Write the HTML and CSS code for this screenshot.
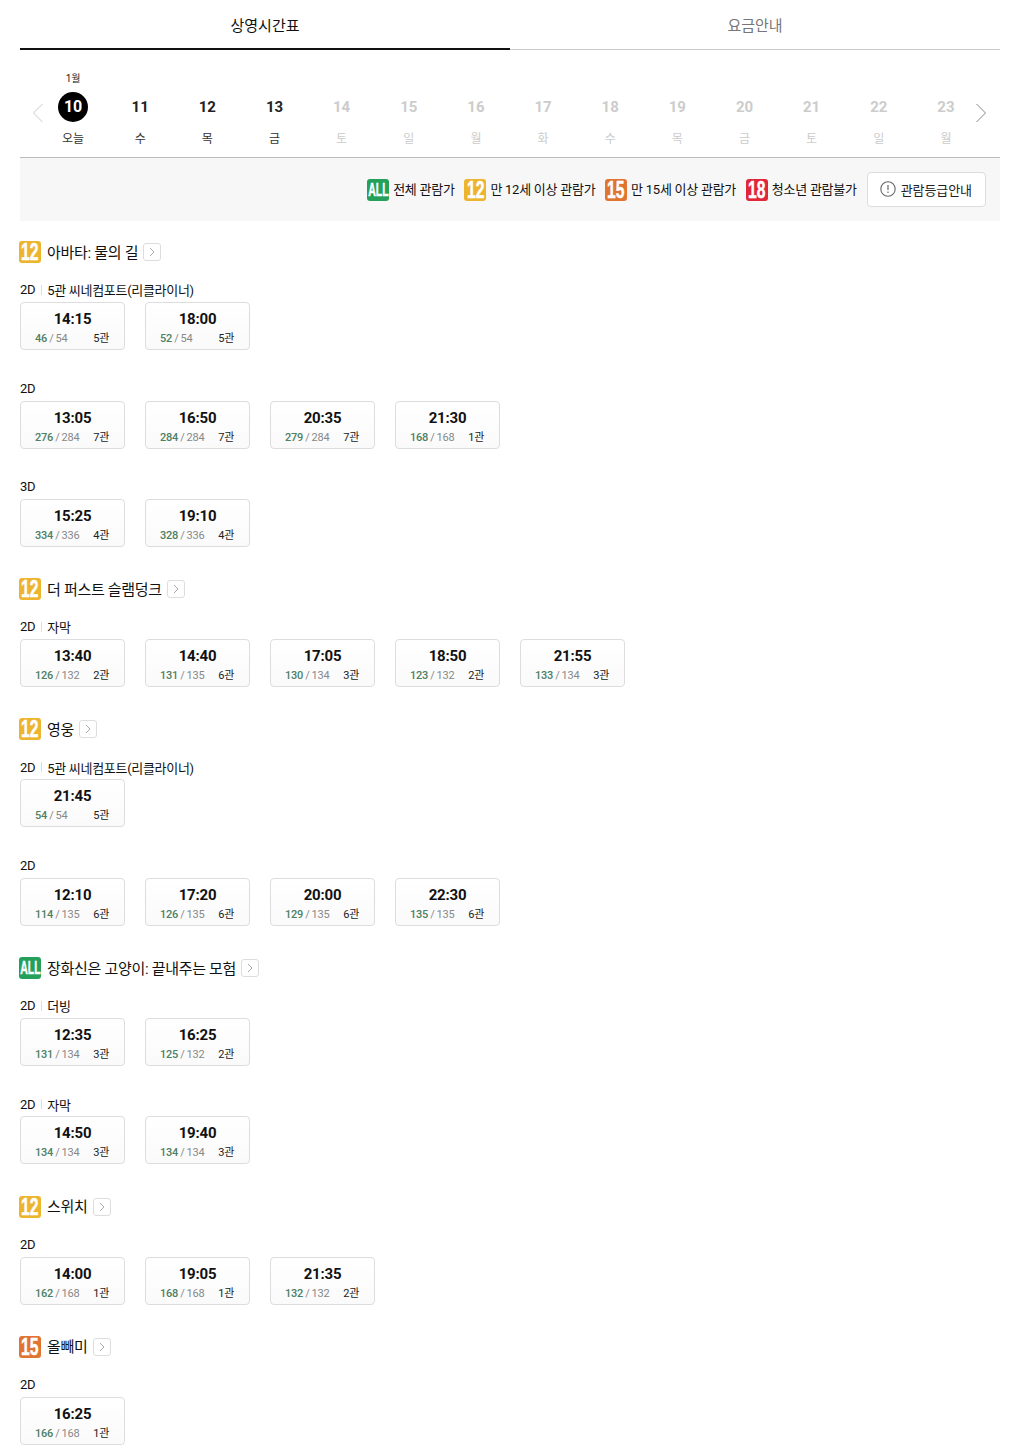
FILE: index.html
```html
<!DOCTYPE html>
<html lang="ko">
<head>
<meta charset="utf-8">
<title>상영시간표</title>
<link rel="stylesheet" href="styles.css">
</head>
<body>
<main class="page">
  <nav class="tabs">
    <a class="tab tab-on">상영시간표</a>
    <a class="tab">요금안내</a>
  </nav>

  <div class="dates">
    <div class="arrow arrow-prev"><svg width="12" height="20" viewBox="0 0 12 20"><path d="M10.5 1 1.5 10l9 9" fill="none" stroke="#ccc" stroke-width="1"/></svg></div>
    <ul class="date-list">
      <li class="date"><span class="month">1월</span><b class="num num-today">10</b><span class="dow">오늘</span></li>
      <li class="date"><b class="num">11</b><span class="dow">수</span></li>
      <li class="date"><b class="num">12</b><span class="dow">목</span></li>
      <li class="date"><b class="num">13</b><span class="dow">금</span></li>
      <li class="date date-off"><b class="num">14</b><span class="dow">토</span></li>
      <li class="date date-off"><b class="num">15</b><span class="dow">일</span></li>
      <li class="date date-off"><b class="num">16</b><span class="dow">월</span></li>
      <li class="date date-off"><b class="num">17</b><span class="dow">화</span></li>
      <li class="date date-off"><b class="num">18</b><span class="dow">수</span></li>
      <li class="date date-off"><b class="num">19</b><span class="dow">목</span></li>
      <li class="date date-off"><b class="num">20</b><span class="dow">금</span></li>
      <li class="date date-off"><b class="num">21</b><span class="dow">토</span></li>
      <li class="date date-off"><b class="num">22</b><span class="dow">일</span></li>
      <li class="date date-off"><b class="num">23</b><span class="dow">월</span></li>
    </ul>
    <div class="arrow arrow-next"><svg width="12" height="20" viewBox="0 0 12 20"><path d="M1.5 1l9 9-9 9" fill="none" stroke="#888" stroke-width="1"/></svg></div>
  </div>

  <div class="legend">
    <span class="legend-item"><i class="rate rate-all"><b>ALL</b></i>전체 관람가</span>
    <span class="legend-item"><i class="rate rate-12"><b>12</b></i>만 12세 이상 관람가</span>
    <span class="legend-item"><i class="rate rate-15"><b>15</b></i>만 15세 이상 관람가</span>
    <span class="legend-item"><i class="rate rate-18"><b>18</b></i>청소년 관람불가</span>
    <a class="legend-btn"><svg width="16" height="16" viewBox="0 0 16 16"><circle cx="8" cy="8" r="7.2" fill="none" stroke="#666" stroke-width="1.1"/><path d="M8 4v5M8 10.6v1.4" stroke="#666" stroke-width="1.2" fill="none"/></svg>관람등급안내</a>
  </div>

  <section class="movie">
    <h2 class="movie-title"><i class="rate rate-12"><b>12</b></i><span class="name">아바타: 물의 길</span><span class="more"><svg width="6" height="10" viewBox="0 0 6 10"><path d="M1 1l4 4-4 4" fill="none" stroke="#aaa"/></svg></span></h2>
    <div class="block">
      <p class="format">2D<span class="sep"></span>5관 씨네컴포트(리클라이너)</p>
      <div class="times">
        <a class="card"><b class="time">14:15</b><span class="info"><span class="seats"><b>46</b> / 54</span><span class="hall">5관</span></span></a>
        <a class="card"><b class="time">18:00</b><span class="info"><span class="seats"><b>52</b> / 54</span><span class="hall">5관</span></span></a>
      </div>
    </div>
    <div class="block">
      <p class="format">2D</p>
      <div class="times">
        <a class="card"><b class="time">13:05</b><span class="info"><span class="seats"><b>276</b> / 284</span><span class="hall">7관</span></span></a>
        <a class="card"><b class="time">16:50</b><span class="info"><span class="seats"><b>284</b> / 284</span><span class="hall">7관</span></span></a>
        <a class="card"><b class="time">20:35</b><span class="info"><span class="seats"><b>279</b> / 284</span><span class="hall">7관</span></span></a>
        <a class="card"><b class="time">21:30</b><span class="info"><span class="seats"><b>168</b> / 168</span><span class="hall">1관</span></span></a>
      </div>
    </div>
    <div class="block">
      <p class="format">3D</p>
      <div class="times">
        <a class="card"><b class="time">15:25</b><span class="info"><span class="seats"><b>334</b> / 336</span><span class="hall">4관</span></span></a>
        <a class="card"><b class="time">19:10</b><span class="info"><span class="seats"><b>328</b> / 336</span><span class="hall">4관</span></span></a>
      </div>
    </div>
  </section>

  <section class="movie">
    <h2 class="movie-title"><i class="rate rate-12"><b>12</b></i><span class="name">더 퍼스트 슬램덩크</span><span class="more"><svg width="6" height="10" viewBox="0 0 6 10"><path d="M1 1l4 4-4 4" fill="none" stroke="#aaa"/></svg></span></h2>
    <div class="block">
      <p class="format">2D<span class="sep"></span>자막</p>
      <div class="times">
        <a class="card"><b class="time">13:40</b><span class="info"><span class="seats"><b>126</b> / 132</span><span class="hall">2관</span></span></a>
        <a class="card"><b class="time">14:40</b><span class="info"><span class="seats"><b>131</b> / 135</span><span class="hall">6관</span></span></a>
        <a class="card"><b class="time">17:05</b><span class="info"><span class="seats"><b>130</b> / 134</span><span class="hall">3관</span></span></a>
        <a class="card"><b class="time">18:50</b><span class="info"><span class="seats"><b>123</b> / 132</span><span class="hall">2관</span></span></a>
        <a class="card"><b class="time">21:55</b><span class="info"><span class="seats"><b>133</b> / 134</span><span class="hall">3관</span></span></a>
      </div>
    </div>
  </section>

  <section class="movie">
    <h2 class="movie-title"><i class="rate rate-12"><b>12</b></i><span class="name">영웅</span><span class="more"><svg width="6" height="10" viewBox="0 0 6 10"><path d="M1 1l4 4-4 4" fill="none" stroke="#aaa"/></svg></span></h2>
    <div class="block">
      <p class="format">2D<span class="sep"></span>5관 씨네컴포트(리클라이너)</p>
      <div class="times">
        <a class="card"><b class="time">21:45</b><span class="info"><span class="seats"><b>54</b> / 54</span><span class="hall">5관</span></span></a>
      </div>
    </div>
    <div class="block">
      <p class="format">2D</p>
      <div class="times">
        <a class="card"><b class="time">12:10</b><span class="info"><span class="seats"><b>114</b> / 135</span><span class="hall">6관</span></span></a>
        <a class="card"><b class="time">17:20</b><span class="info"><span class="seats"><b>126</b> / 135</span><span class="hall">6관</span></span></a>
        <a class="card"><b class="time">20:00</b><span class="info"><span class="seats"><b>129</b> / 135</span><span class="hall">6관</span></span></a>
        <a class="card"><b class="time">22:30</b><span class="info"><span class="seats"><b>135</b> / 135</span><span class="hall">6관</span></span></a>
      </div>
    </div>
  </section>

  <section class="movie">
    <h2 class="movie-title"><i class="rate rate-all"><b>ALL</b></i><span class="name">장화신은 고양이: 끝내주는 모험</span><span class="more"><svg width="6" height="10" viewBox="0 0 6 10"><path d="M1 1l4 4-4 4" fill="none" stroke="#aaa"/></svg></span></h2>
    <div class="block">
      <p class="format">2D<span class="sep"></span>더빙</p>
      <div class="times">
        <a class="card"><b class="time">12:35</b><span class="info"><span class="seats"><b>131</b> / 134</span><span class="hall">3관</span></span></a>
        <a class="card"><b class="time">16:25</b><span class="info"><span class="seats"><b>125</b> / 132</span><span class="hall">2관</span></span></a>
      </div>
    </div>
    <div class="block">
      <p class="format">2D<span class="sep"></span>자막</p>
      <div class="times">
        <a class="card"><b class="time">14:50</b><span class="info"><span class="seats"><b>134</b> / 134</span><span class="hall">3관</span></span></a>
        <a class="card"><b class="time">19:40</b><span class="info"><span class="seats"><b>134</b> / 134</span><span class="hall">3관</span></span></a>
      </div>
    </div>
  </section>

  <section class="movie">
    <h2 class="movie-title"><i class="rate rate-12"><b>12</b></i><span class="name">스위치</span><span class="more"><svg width="6" height="10" viewBox="0 0 6 10"><path d="M1 1l4 4-4 4" fill="none" stroke="#aaa"/></svg></span></h2>
    <div class="block">
      <p class="format">2D</p>
      <div class="times">
        <a class="card"><b class="time">14:00</b><span class="info"><span class="seats"><b>162</b> / 168</span><span class="hall">1관</span></span></a>
        <a class="card"><b class="time">19:05</b><span class="info"><span class="seats"><b>168</b> / 168</span><span class="hall">1관</span></span></a>
        <a class="card"><b class="time">21:35</b><span class="info"><span class="seats"><b>132</b> / 132</span><span class="hall">2관</span></span></a>
      </div>
    </div>
  </section>

  <section class="movie">
    <h2 class="movie-title"><i class="rate rate-15"><b>15</b></i><span class="name">올빼미</span><span class="more"><svg width="6" height="10" viewBox="0 0 6 10"><path d="M1 1l4 4-4 4" fill="none" stroke="#aaa"/></svg></span></h2>
    <div class="block">
      <p class="format">2D</p>
      <div class="times">
        <a class="card"><b class="time">16:25</b><span class="info"><span class="seats"><b>166</b> / 168</span><span class="hall">1관</span></span></a>
      </div>
    </div>
  </section>
</main>
</body>
</html>
```

FILE: styles.css
```css
* { box-sizing: border-box; }
html, body { margin: 0; padding: 0; background: #fff; }
body {
  font-family: Roboto, "Noto Sans CJK KR", "Noto Sans", sans-serif;
  color: #222;
}
ul { list-style: none; margin: 0; padding: 0; }
p, h2 { margin: 0; }
i { font-style: normal; }

.page { width: 980px; margin: 0 20px; }

.tabs { display: flex; height: 50px; }
.tab {
  flex: 1;
  border-bottom: 1px solid #ccc;
  text-align: center;
  font-size: 15px;
  line-height: 53px;
  color: #777;
}
.tab-on { border-bottom: 2px solid #111; color: #111; }

.dates {
  display: grid;
  grid-template-columns: 19.5px 940px 20.5px;
  height: 108px;
  border-bottom: 1px solid #bbb;
}
.arrow { padding-top: 53px; }
.arrow-prev svg { margin-left: 12px; overflow: visible; }
.arrow-next svg { margin-left: -4.5px; overflow: visible; }
.date-list { display: grid; grid-template-columns: repeat(14, 1fr); }
.date {
  position: relative;
  display: flex;
  flex-direction: column;
  align-items: center;
  padding-top: 42px;
}
.month {
  position: absolute;
  top: 22px;
  font-size: 10px;
  line-height: 14px;
  color: #222;
}
.num {
  width: 30px;
  height: 30px;
  border-radius: 50%;
  text-align: center;
  font-size: 15px;
  font-weight: 700;
  line-height: 30px;
  color: #222;
}
.num-today { background: #000; color: #fff; font-size: 16px; }
.dow { margin-top: 8px; font-size: 12px; line-height: 18px; color: #333; }
.date-off .num { color: #ccc; }
.date-off .dow { color: #ccc; }

.legend {
  display: flex;
  align-items: center;
  justify-content: flex-end;
  gap: 9.7px;
  height: 63px;
  padding-right: 14px;
  background: #f7f7f7;
}
.legend-item {
  display: flex;
  align-items: center;
  gap: 4px;
  font-size: 13px;
  line-height: 22px;
  color: #111;
  letter-spacing: -0.25px;
}
.legend-btn {
  display: flex;
  align-items: center;
  gap: 5px;
  height: 35px;
  padding: 0 13px 0 12px;
  margin-top: -1px;
  margin-left: 0.3px;
  background: #fff;
  border: 1px solid #ddd;
  border-radius: 4px;
  font-size: 13px;
  color: #222;
  letter-spacing: -0.08px;
}

.rate {
  flex: none;
  display: flex;
  align-items: center;
  justify-content: center;
  width: 22px;
  height: 22px;
  border-radius: 3px;
  color: #fff;
  letter-spacing: 0;
  font-family: "Liberation Sans", sans-serif;
}
.rate b {
  display: block;
  flex: none;
  font-size: 23px;
  font-weight: 700;
  line-height: 22px;
  -webkit-text-stroke: 0.5px #fff;
  transform: scaleX(0.68);
}
.rate-all b { font-size: 19px; transform: scaleX(0.55); }
.rate-all { background: #24a05b; }
.rate-12 { background: #ecb42f; }
.rate-15 { background: #e07431; }
.rate-18 { background: #e0273a; }

.movie { padding-bottom: 31.25px; }
.movie:first-of-type { margin-top: 20.15px; }
.movie-title {
  display: flex;
  align-items: center;
  gap: 6px;
  height: 22px;
  margin-left: -1px;
  font-size: 15px;
  font-weight: 400;
  color: #111;
  letter-spacing: -0.3px;
}
.name { margin-top: -2px; }
.more {
  display: flex;
  align-items: center;
  justify-content: center;
  width: 18px;
  height: 18px;
  margin-left: -1px;
  border: 1px solid #ddd;
  border-radius: 3px;
}

.block { margin-top: 17.5px; }
.block + .block { margin-top: 28.88px; }
.format {
  display: flex;
  align-items: center;
  height: 21.5px;
  padding-bottom: 3px;
  font-size: 13px;
  color: #111;
  letter-spacing: -0.3px;
}
.sep {
  width: 1px;
  height: 10px;
  margin: 0 5px 0 6px;
  background: #ddd;
}
.times { display: flex; gap: 20px; }
.card {
  display: flex;
  flex-direction: column;
  width: 105px;
  height: 48px;
  padding: 6px 15px 0;
  border: 1px solid #ddd;
  border-radius: 4px;
  background: linear-gradient(#fff, #fafafa);
}
.time {
  text-align: center;
  font-size: 15px;
  font-weight: 700;
  line-height: 20px;
  color: #111;
  letter-spacing: -0.2px;
}
.info {
  display: flex;
  justify-content: space-between;
  align-items: center;
  margin: 2px 0 0 -1px;
  line-height: 16px;
}
.seats { font-size: 11px; color: #888; word-spacing: -0.5px; letter-spacing: -0.2px; }
.seats b { font-weight: 500; color: #4d8064; }
.hall { font-size: 11px; color: #222; letter-spacing: -0.3px; }
```
